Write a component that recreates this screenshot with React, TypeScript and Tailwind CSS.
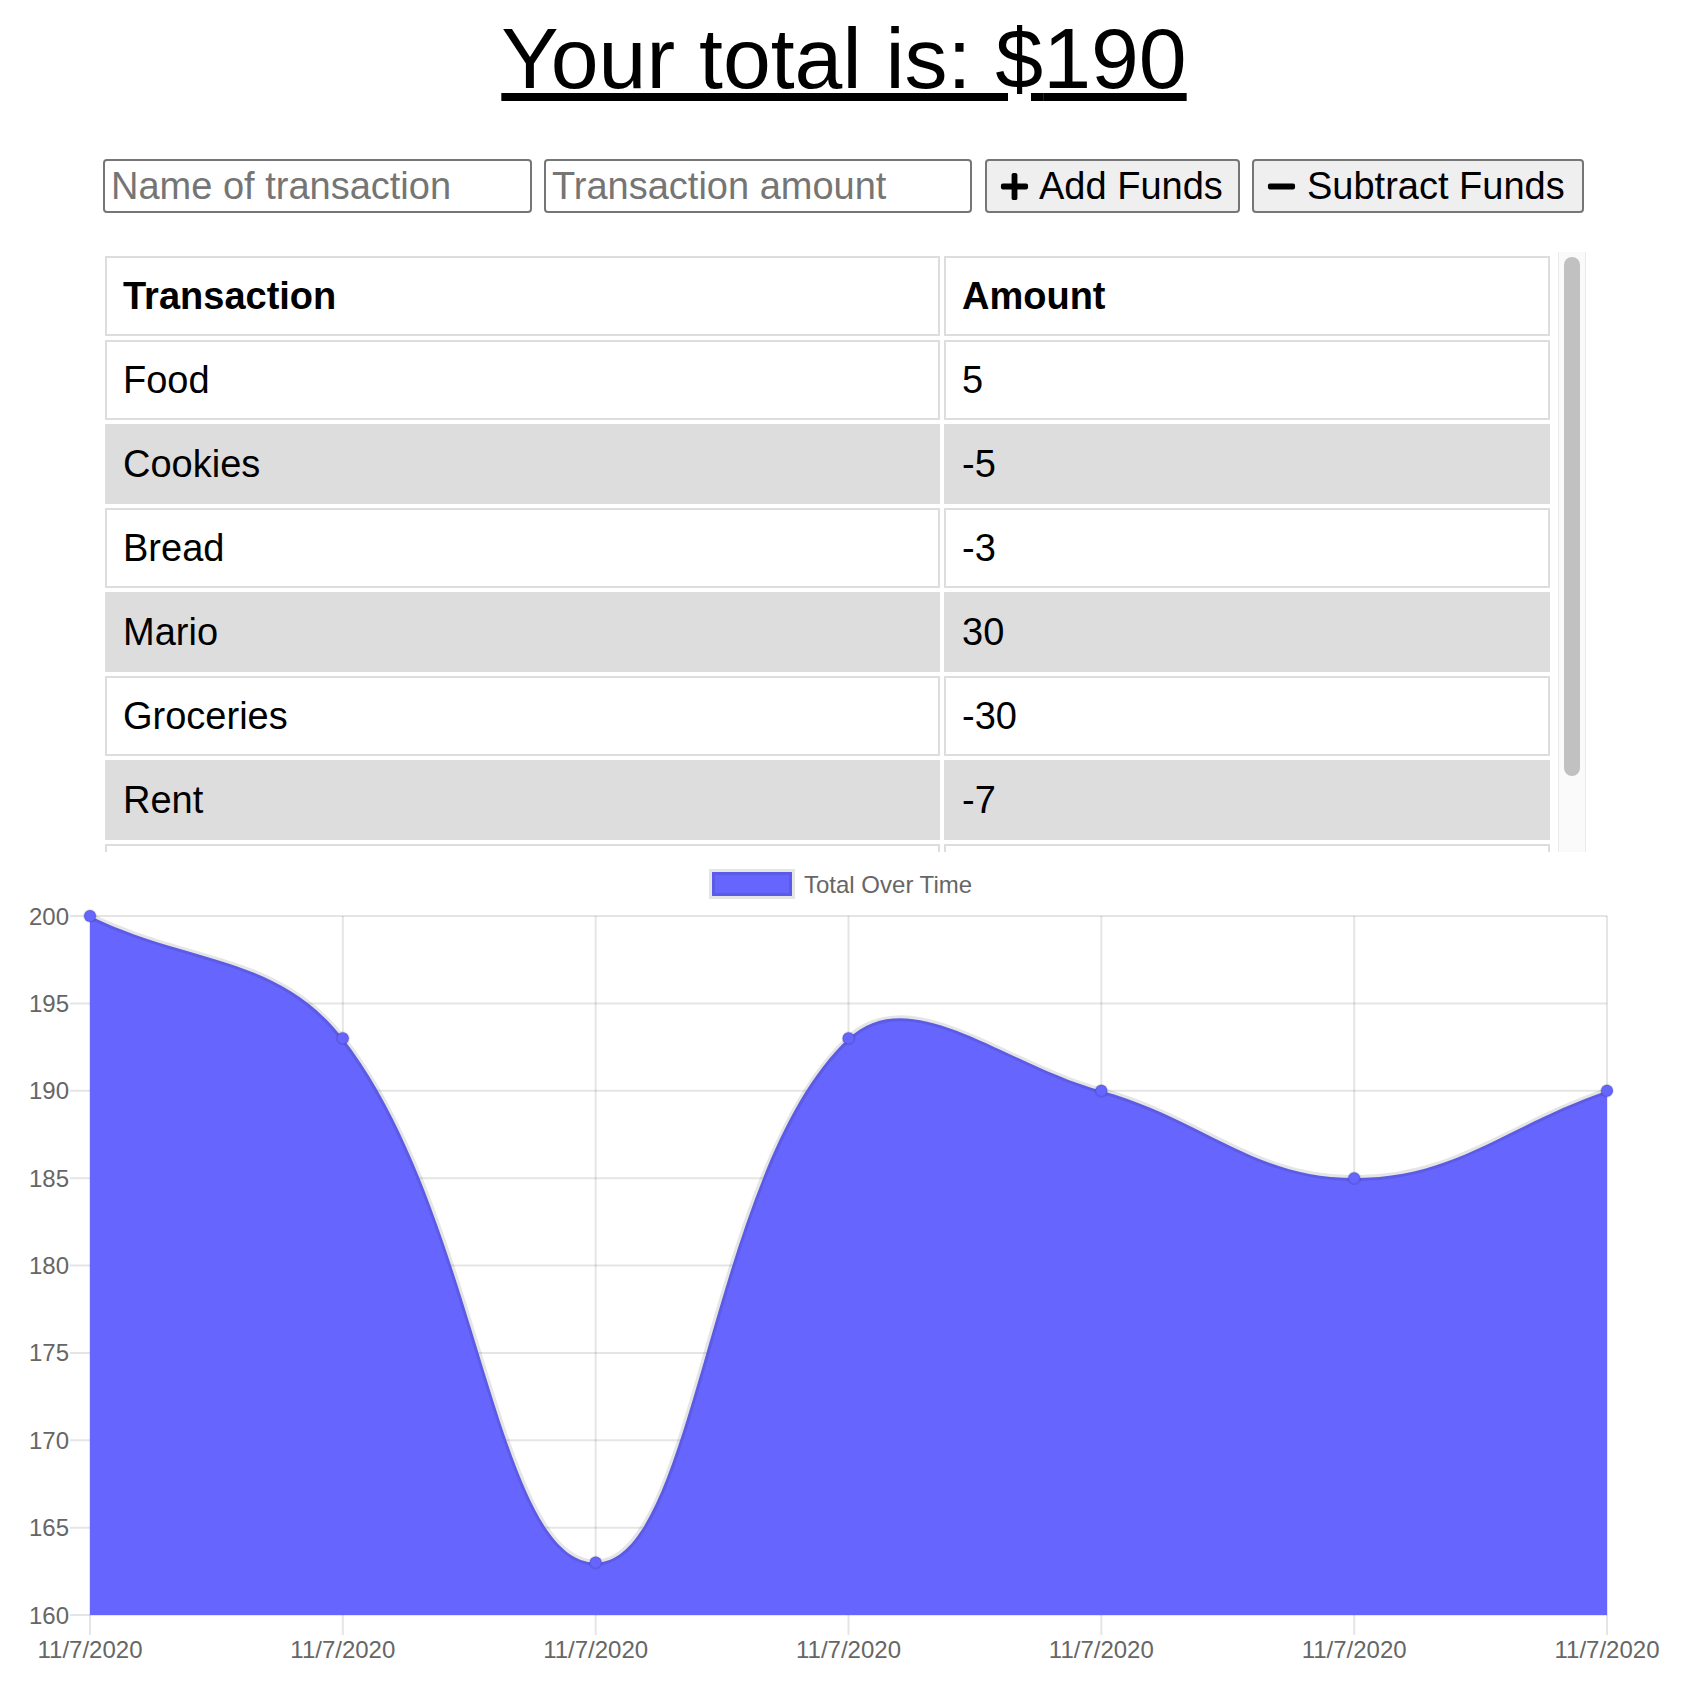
import { FaPlus, FaMinus } from "react-icons/fa"

type Entry = { name: string; value: number }

// newest first, like the table
const transactions: Entry[] = [
    { name: "Food", value: 5 },
    { name: "Cookies", value: -5 },
    { name: "Bread", value: -3 },
    { name: "Mario", value: 30 },
    { name: "Groceries", value: -30 },
    { name: "Rent", value: -7 },
    { name: "Paycheck", value: 200 },
]

const runningTotals = () => {
    let sum = 0
    return [...transactions].reverse().map((t) => {
        sum += t.value
        return sum
    })
}

type Pt = { x: number; y: number }

// same spline as chart.js v2 (tension 0.4), control points capped to the chart area
const controlPoints = (pts: Pt[], t: number, area: { left: number; right: number; top: number; bottom: number }) => {
    const cap = (p: Pt) => ({
        x: Math.min(Math.max(p.x, area.left), area.right),
        y: Math.min(Math.max(p.y, area.top), area.bottom),
    })
    return pts.map((cur, i) => {
        const prev = pts[i - 1] || cur
        const next = pts[i + 1] || cur
        const d01 = Math.hypot(cur.x - prev.x, cur.y - prev.y)
        const d12 = Math.hypot(next.x - cur.x, next.y - cur.y)
        let s01 = d01 / (d01 + d12)
        let s12 = d12 / (d01 + d12)
        if (isNaN(s01)) s01 = 0
        if (isNaN(s12)) s12 = 0
        const fa = t * s01
        const fb = t * s12
        return {
            prev: cap({ x: cur.x - fa * (next.x - prev.x), y: cur.y - fa * (next.y - prev.y) }),
            next: cap({ x: cur.x + fb * (next.x - prev.x), y: cur.y + fb * (next.y - prev.y) }),
        }
    })
}

const Chart = ({ data }: { data: number[] }) => {
    const area = { left: 90, right: 1607, top: 64, bottom: 763 }
    const yMin = 160
    const yMax = 200
    const ticks = [200, 195, 190, 185, 180, 175, 170, 165, 160]
    const step = (area.right - area.left) / (data.length - 1)
    const yOf = (v: number) => area.top + ((yMax - v) * (area.bottom - area.top)) / (yMax - yMin)
    const pts = data.map((v, i) => ({ x: area.left + i * step, y: yOf(v) }))
    const cps = controlPoints(pts, 0.4, area)

    let line = `M ${pts[0].x} ${pts[0].y}`
    for (let i = 1; i < pts.length; i++) {
        const a = cps[i - 1].next
        const b = cps[i].prev
        line += ` C ${a.x} ${a.y} ${b.x} ${b.y} ${pts[i].x} ${pts[i].y}`
    }
    const fill = `${line} L ${area.right} ${area.bottom} L ${area.left} ${area.bottom} Z`
    const font = "Liberation Sans, Arial, sans-serif"

    return (
        <svg width={1688} height={844} viewBox="0 0 1688 844" className="block">
            {/* legend */}
            <rect x={712} y={20} width={80} height={24} fill="#6666ff" stroke="rgba(0,0,0,0.1)" strokeWidth={6} />
            <text x={804} y={40.5} fontSize={24} fill="#666" fontFamily={font}>
                Total Over Time
            </text>

            {/* grid */}
            {ticks.map((v) => (
                <g key={v}>
                    <line x1={area.left - 20} x2={area.right} y1={yOf(v)} y2={yOf(v)} stroke="rgba(0,0,0,0.1)" strokeWidth={2} />
                    <text x={69} y={yOf(v) + 8.5} fontSize={24} fill="#666" textAnchor="end" fontFamily={font}>
                        {v}
                    </text>
                </g>
            ))}
            {pts.map((p, i) => (
                <g key={i}>
                    <line x1={p.x} x2={p.x} y1={area.top} y2={area.bottom + 20} stroke="rgba(0,0,0,0.1)" strokeWidth={2} />
                    <text x={p.x} y={806} fontSize={24} fill="#666" textAnchor="middle" fontFamily={font}>
                        11/7/2020
                    </text>
                </g>
            ))}

            {/* dataset */}
            <path d={fill} fill="#6666ff" />
            <path d={line} fill="none" stroke="rgba(0,0,0,0.1)" strokeWidth={6} />
            {pts.map((p, i) => (
                <circle key={i} cx={p.x} cy={p.y} r={6} fill="#6666ff" stroke="rgba(0,0,0,0.1)" strokeWidth={2} />
            ))}
        </svg>
    )
}

export default function App() {
    const totals = runningTotals()
    const total = totals[totals.length - 1]

    return (
        <div className="bg-white text-black font-['Liberation_Sans',Arial,sans-serif] h-[1696px] overflow-hidden">
            <h1 className="mt-[9px] text-center text-[86px] leading-[98px] font-normal underline">
                Your total is: ${total}
            </h1>

            <div className="w-[1486px] mx-auto">
                <form className="mt-[52px] ml-[2px] flex items-center" onSubmit={(e) => e.preventDefault()}>
                    <input
                        type="text"
                        placeholder="Name of transaction"
                        className="w-[429px] h-[54px] border-2 border-[#767676] rounded-[4px] px-[6px] text-[38px] placeholder:text-[#757575] bg-white"
                    />
                    <input
                        type="number"
                        placeholder="Transaction amount"
                        className="ml-[12px] w-[428px] h-[54px] border-2 border-[#767676] rounded-[4px] px-[6px] text-[38px] placeholder:text-[#757575] bg-white"
                    />
                    <button
                        type="button"
                        className="ml-[13px] w-[255px] h-[54px] flex items-center px-[12px] bg-[#efefef] border-2 border-[#767676] rounded-[4px] text-[38px]"
                    >
                        <FaPlus size={31} />
                        <span className="ml-[9px]">Add Funds</span>
                    </button>
                    <button
                        type="button"
                        className="ml-[12px] w-[332px] h-[54px] flex items-center px-[12px] bg-[#efefef] border-2 border-[#767676] rounded-[4px] text-[38px]"
                    >
                        <FaMinus size={31} />
                        <span className="ml-[10px]">Subtract Funds</span>
                    </button>
                </form>

                <div className="mt-[39px] h-[600px] flex">
                    <div className="w-[1457px] h-full overflow-hidden">
                        <table className="table-fixed w-[1453px] border-separate border-spacing-1 text-[38px] leading-[44px]">
                            <thead>
                                <tr>
                                    <th className="w-[835px] border-2 border-[#ddd] p-4 text-left font-bold">Transaction</th>
                                    <th className="w-[606px] border-2 border-[#ddd] p-4 text-left font-bold">Amount</th>
                                </tr>
                            </thead>
                            <tbody>
                                {transactions.map((t, i) => (
                                    <tr key={t.name} className={i % 2 === 1 ? "bg-[#ddd]" : ""}>
                                        <td className="border-2 border-[#ddd] p-4">{t.name}</td>
                                        <td className="border-2 border-[#ddd] p-4">{t.value}</td>
                                    </tr>
                                ))}
                            </tbody>
                        </table>
                    </div>
                    <div className="w-[28px] h-full bg-[#fafafa] border-x border-[#ebebeb]">
                        <div className="mt-[5px] mx-auto w-[16px] h-[519px] rounded-full bg-[#c1c1c1]" />
                    </div>
                </div>
            </div>

            <Chart data={totals} />
        </div>
    )
}
